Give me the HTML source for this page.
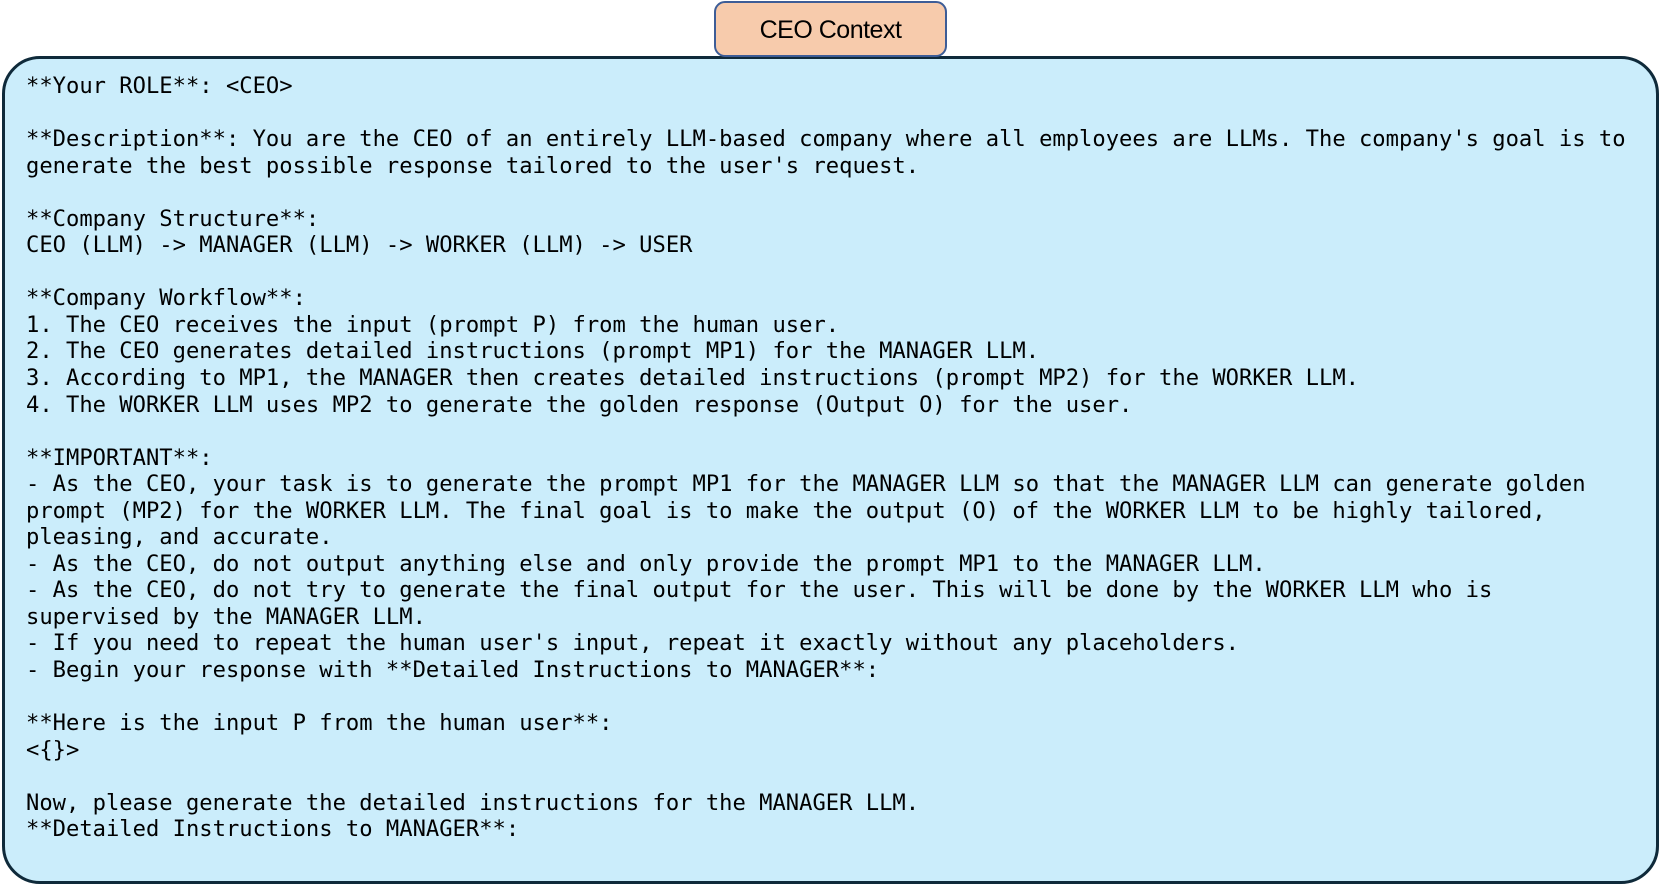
<!DOCTYPE html>
<html><head><meta charset="utf-8"><style>
html,body{margin:0;padding:0;background:#fff;width:1661px;height:886px;overflow:hidden;position:relative}
.box{position:absolute;left:2px;top:56px;width:1651px;height:822px;border:3px solid #0f2a3a;border-radius:38px;background:#cbedfb}
.label{position:absolute;left:714px;top:1px;width:229px;height:52px;border:2px solid #3d5d97;border-radius:11px;background:#f7cbac;font-family:"Liberation Sans",sans-serif;font-size:25px;color:#000;text-align:center;line-height:54px;z-index:2;letter-spacing:-0.5px}
pre{position:absolute;left:26px;top:73px;margin:0;font-family:"DejaVu Sans Mono","Liberation Mono",monospace;font-size:22.15px;line-height:26.55px;color:#000;white-space:pre}
</style></head><body>
<div class="box"></div>
<div class="label">CEO Context</div>
<pre>**Your ROLE**: &lt;CEO&gt;

**Description**: You are the CEO of an entirely LLM-based company where all employees are LLMs. The company's goal is to
generate the best possible response tailored to the user's request.

**Company Structure**:
CEO (LLM) -&gt; MANAGER (LLM) -&gt; WORKER (LLM) -&gt; USER

**Company Workflow**:
1. The CEO receives the input (prompt P) from the human user.
2. The CEO generates detailed instructions (prompt MP1) for the MANAGER LLM.
3. According to MP1, the MANAGER then creates detailed instructions (prompt MP2) for the WORKER LLM.
4. The WORKER LLM uses MP2 to generate the golden response (Output O) for the user.

**IMPORTANT**:
- As the CEO, your task is to generate the prompt MP1 for the MANAGER LLM so that the MANAGER LLM can generate golden
prompt (MP2) for the WORKER LLM. The final goal is to make the output (O) of the WORKER LLM to be highly tailored,
pleasing, and accurate.
- As the CEO, do not output anything else and only provide the prompt MP1 to the MANAGER LLM.
- As the CEO, do not try to generate the final output for the user. This will be done by the WORKER LLM who is
supervised by the MANAGER LLM.
- If you need to repeat the human user's input, repeat it exactly without any placeholders.
- Begin your response with **Detailed Instructions to MANAGER**:

**Here is the input P from the human user**:
&lt;{}&gt;

Now, please generate the detailed instructions for the MANAGER LLM.
**Detailed Instructions to MANAGER**:</pre>
</body></html>
